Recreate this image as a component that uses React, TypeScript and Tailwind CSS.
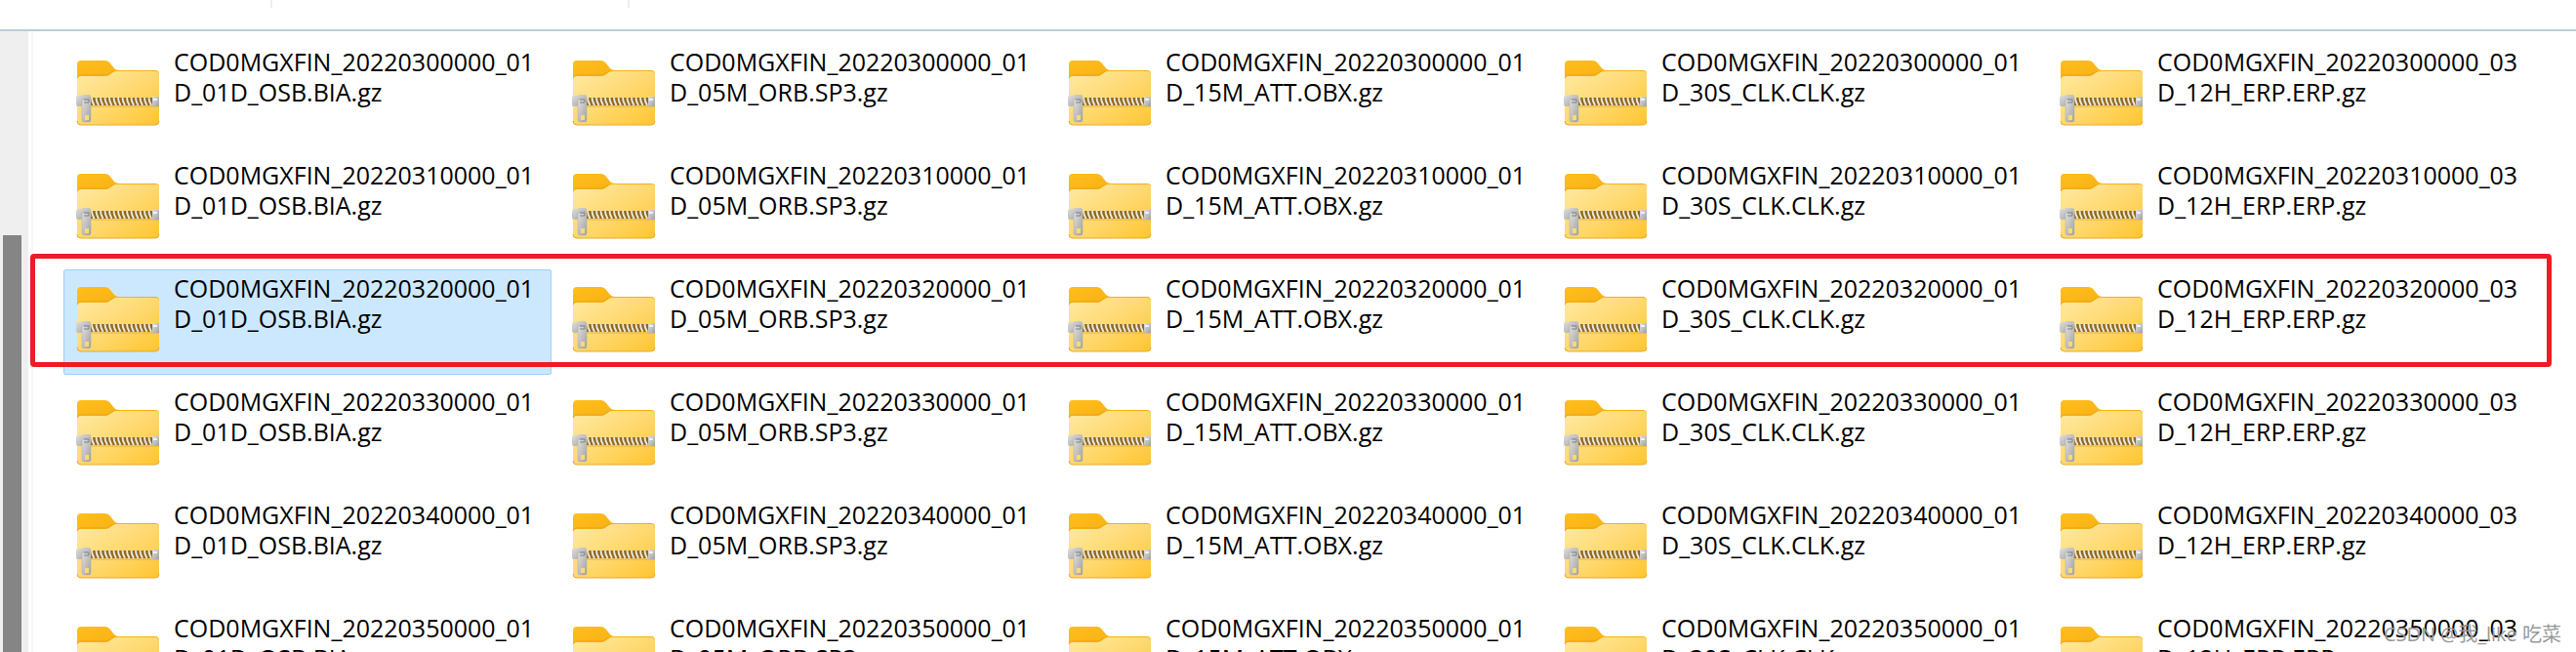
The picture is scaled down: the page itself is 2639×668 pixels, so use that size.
import { useState } from 'react';

const DAYS = ['030', '031', '032', '033', '034', '035'];

const PRODUCTS = [
  { span: '01', suffix: 'D_01D_OSB.BIA.gz' },
  { span: '01', suffix: 'D_05M_ORB.SP3.gz' },
  { span: '01', suffix: 'D_15M_ATT.OBX.gz' },
  { span: '01', suffix: 'D_30S_CLK.CLK.gz' },
  { span: '03', suffix: 'D_12H_ERP.ERP.gz' },
];

const TEETH = Array.from({ length: 14 }, (_, i) => 16 + i * 4.5);

// gradients shared by every archive icon
function IconDefs() {
  return (
    <svg className="absolute size-0" aria-hidden="true">
      <defs>
        <linearGradient id="tab" x1="0" y1="0" x2="1" y2="1">
          <stop offset="0" stopColor="#ffbf1c" />
          <stop offset="1" stopColor="#f0a30c" />
        </linearGradient>
        <linearGradient id="front" x1="0" y1="0" x2="1" y2="1">
          <stop offset="0" stopColor="#ffe9a2" />
          <stop offset="0.5" stopColor="#ffd970" />
          <stop offset="1" stopColor="#ffc52f" />
        </linearGradient>
        <linearGradient id="metal" x1="0" y1="0" x2="1" y2="1">
          <stop offset="0" stopColor="#e0e0e0" />
          <stop offset="1" stopColor="#a0a0a0" />
        </linearGradient>
      </defs>
    </svg>
  );
}

function ArchiveIcon() {
  return (
    <svg viewBox="0 0 86 68" className="h-[68px] w-[86px] shrink-0" aria-hidden="true">
      <path d="M1 5q0-4 4-4h24q4 0 6 3l4 5q2 2 5 2h37q4 0 4 4v20H1z" fill="url(#tab)" />
      <path d="M1 21q0-4 4-4h25q3 0 5-2l3-2q2-1 4-1h39q4 0 4 4v47q0 4-4 4H5q-4 0-4-4z" fill="url(#front)" />
      <path d="M1 19q1-3 4-3h25q3 0 5-2l3-2" fill="none" stroke="#e39a10" strokeOpacity="0.6" />
      <path d="M1 63q0 4 4 4h76q4 0 4-4" fill="none" stroke="#e9a82c" />
      <path d="M7 48h78" stroke="#e0a52c" strokeOpacity="0.8" />
      <rect x="14" y="39" width="65" height="8" fill="#91691c" />
      {TEETH.map(x => (
        <path key={x} d={`M${x} 39l.5 3.5 2 4.5`} stroke="#ebe8e1" strokeWidth="1.9" fill="none" />
      ))}
      <rect x="78" y="38" width="7" height="10" fill="url(#metal)" />
      <path d="M79 41h4" stroke="#f0f0f0" strokeWidth="2" />
      <path d="M0 39q0-2 2-2h3l2-1h6q2 0 2 2v6q0 2-2 2H7l-2 2H2q-2 0-2-2z" fill="url(#metal)" />
      <path d="M6 41h9v21q0 2-2 2H8q-2 0-2-2z" fill="url(#metal)" stroke="#a8a8a8" strokeWidth="0.5" />
      <rect x="9" y="57" width="4" height="5" fill="#ffd970" />
      <path d="M8 41h5v3H8" stroke="#808080" fill="none" />
    </svg>
  );
}

interface FileTileProps {
  first: string;
  second: string;
  selected: boolean;
  onSelect: () => void;
}

function FileTile({ first, second, selected, onSelect }: FileTileProps) {
  return (
    <button
      onClick={onSelect}
      className={`flex h-[108px] items-start rounded-xs border pl-3 text-left ${
        selected ? 'border-[#99d1ff] bg-[#cce8ff]' : 'border-transparent'
      }`}
    >
      <span className="pt-4">
        <ArchiveIcon />
      </span>
      <span className="pt-[3px] pl-[14px] text-[25px] leading-[31px] whitespace-nowrap text-black">
        {first}
        <br />
        {second}
      </span>
    </button>
  );
}

export default function App() {
  const [selected, setSelected] = useState('032-0');

  return (
    <div className="relative flex h-screen flex-col overflow-hidden bg-white font-['Open_Sans','Noto_Sans_CJK_SC',sans-serif]">
      <IconDefs />

      {/* Toolbar edge */}
      <header className="flex h-8 shrink-0 border-b-2 border-[#bacddb]">
        <div className="h-2 w-[279px] border-r-2 border-[#ededed]" />
        <div className="h-2 w-[366px] border-r-2 border-[#ededed]" />
      </header>

      <div className="flex min-h-0 flex-1">
        {/* Navigation scrollbar */}
        <div className="flex w-[29px] shrink-0 flex-col bg-[#efefef] pt-[209px] pl-[3px]">
          <div className="w-[19px] flex-1 bg-[#858585]" />
        </div>

        <main className="ml-[3px] flex-1 overflow-hidden border-l-2 border-[#f7f7f7] pt-3 pl-[31px]">
          <div className="grid grid-cols-[repeat(5,500px)] gap-2">
            {DAYS.map(day =>
              PRODUCTS.map((p, i) => {
                const id = `${day}-${i}`;
                return (
                  <FileTile
                    key={id}
                    first={`COD0MGXFIN_2022${day}0000_${p.span}`}
                    second={p.suffix}
                    selected={selected === id}
                    onSelect={() => setSelected(id)}
                  />
                );
              })
            )}
          </div>
        </main>
      </div>

      {/* Highlight around the third row */}
      <div className="pointer-events-none absolute top-[260px] right-[25px] left-[31px] h-[116px] rounded-sm border-5 border-[#ee1c24]" />

      <p className="pointer-events-none absolute right-[15px] bottom-1 text-[20px] leading-7 text-[#999999]">
        CSDN @我_like 吃菜
      </p>
    </div>
  );
}
